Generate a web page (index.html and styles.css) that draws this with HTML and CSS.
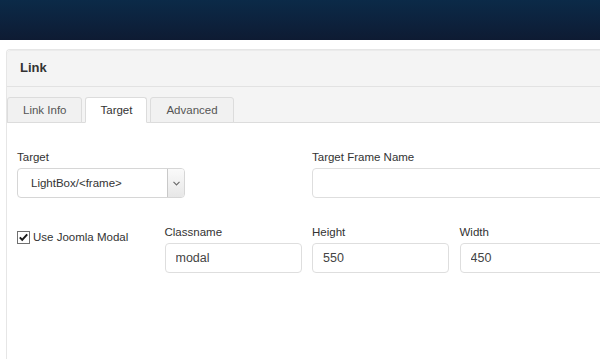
FILE: index.html
```html
<!DOCTYPE html>
<html>

<head>
  <meta charset="utf-8" />
  <title>Link</title>
  <link rel="stylesheet" href="styles.css">
</head>

<body>
  <div class="topbar"></div>
  <div class="dialog">
    <div class="dialog-title">Link</div>
    <ul class="tabs">
      <li class="tab">Link Info</li>
      <li class="tab active">Target</li>
      <li class="tab">Advanced</li>
    </ul>
    <div class="dialog-body">
      <div class="form-grid">
        <div class="field field-half">
          <label class="field-label">Target</label>
          <div class="select">
            <span class="select-value">LightBox/&lt;frame&gt;</span>
            <span class="select-arrow">
              <svg width="7" height="5" viewBox="0 0 7 5"><path d="M0.5 0.8 L3.5 3.8 L6.5 0.8" fill="none" stroke="#6b6b6b" stroke-width="1.2"/></svg>
            </span>
          </div>
        </div>
        <div class="field field-half">
          <label class="field-label" for="framename">Target Frame Name</label>
          <input class="text-input" type="text" id="framename" value="">
        </div>

        <label class="check">
          <span class="checkbox">
            <svg width="13" height="13" viewBox="0 0 13 13">
              <rect x="0.5" y="0.5" width="12" height="12" fill="#fff" stroke="#707070"/>
              <path d="M2.8 6.4 L5.2 8.9 L10.2 3.4" fill="none" stroke="#1a1a1a" stroke-width="2"/>
            </svg>
          </span>
          Use Joomla Modal
        </label>
        <div class="field">
          <label class="field-label" for="classname">Classname</label>
          <input class="text-input" type="text" id="classname" value="modal">
        </div>
        <div class="field">
          <label class="field-label" for="height">Height</label>
          <input class="text-input" type="text" id="height" value="550">
        </div>
        <div class="field">
          <label class="field-label" for="width">Width</label>
          <input class="text-input" type="text" id="width" value="450">
        </div>
      </div>
    </div>
  </div>
</body>

</html>
```

FILE: styles.css
```css
html,
body {
  margin: 0;
  padding: 0;
  overflow: hidden;
}

body {
  width: 600px;
  height: 359px;
  background: #fff;
  color: #333;
  font-family: "Liberation Sans", Arial, sans-serif;
  font-size: 11.5px;
}

.topbar {
  height: 40px;
  background: linear-gradient(#0b2a48, #0e1b33);
}

.dialog {
  margin: 9px 0 0 6px;
  width: 594px;
  height: 310px;
  border: 1px solid #e6e6e6;
  border-right: none;
  border-bottom: none;
  border-radius: 4px 0 0 0;
  box-sizing: border-box;
  overflow: hidden;
}

.dialog-title {
  height: 36px;
  line-height: 36px;
  padding-left: 13px;
  background: #f4f4f4;
  border-bottom: 1px solid #e2e2e2;
  border-radius: 4px 0 0 0;
  box-shadow: inset 0 1px #ebebeb;
  font-size: 13px;
  font-weight: bold;
  color: #333;
}

.tabs {
  display: flex;
  gap: 3px;
  margin: 0;
  padding: 10px 0 0 0;
  list-style: none;
  background: #f4f4f4;
  border-bottom: 1px solid #dcdcdc;
}

.tab {
  height: 26px;
  line-height: 24px;
  margin-bottom: -1px;
  padding: 0 15px;
  box-sizing: border-box;
  background: #f1f1f1;
  border: 1px solid #dcdcdc;
  border-radius: 3px 3px 0 0;
  color: #555;
}

.tab.active {
  padding: 0 14px;
  background: #fff;
  border-bottom-color: #fff;
  color: #333;
}

.dialog-body {
  padding: 27px 0 0 10px;
}

.form-grid {
  display: grid;
  grid-template-columns: 137px 137px 137px 160px;
  column-gap: 10.5px;
  row-gap: 27px;
}

.field-half {
  grid-column: span 2;
}

.field-label {
  display: block;
  line-height: 15px;
  margin-bottom: 3px;
  color: #333;
}

.select {
  display: flex;
  width: 168px;
  height: 30px;
  box-sizing: border-box;
  border: 1px solid #d6d6d6;
  border-radius: 4px;
  overflow: hidden;
}

.select-value {
  flex-grow: 1;
  padding-left: 13px;
  line-height: 28px;
  color: #333;
}

.select-arrow {
  display: flex;
  align-items: center;
  justify-content: center;
  width: 16px;
  border-left: 1px solid #c9c9c9;
  background: linear-gradient(#fafafa, #e7e7e7);
}

.text-input {
  display: block;
  width: 100%;
  height: 30px;
  box-sizing: border-box;
  margin: 0;
  padding: 0 10px;
  border: 1px solid #dedede;
  border-radius: 4px;
  font-family: inherit;
  font-size: 12.5px;
  color: #444;
  outline: none;
}

.check {
  display: flex;
  align-items: center;
  gap: 3px;
  align-self: start;
  padding-top: 5px;
  line-height: 15px;
  color: #333;
}

.checkbox {
  display: flex;
  width: 13px;
  height: 13px;
}
```
